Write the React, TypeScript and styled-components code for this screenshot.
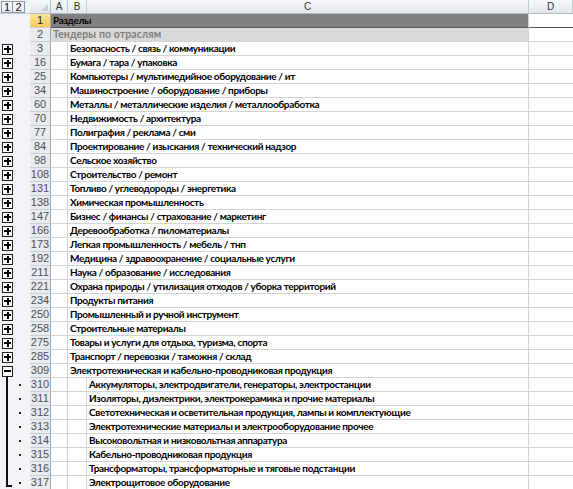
import React from "react";
import styled, { createGlobalStyle, css } from "styled-components";

const Global = createGlobalStyle`
  html, body { margin: 0; padding: 0; background: #ffffff; overflow: hidden; }
  body { font-family: Lato, "Liberation Sans", sans-serif; }
`;

const ROW_H = 14;
const COLS = "30px 21px 17px 19px 442px 1fr";

const Sheet = styled.div`
  width: 573px;
  height: 489px;
  overflow: hidden;
  display: flex;
  flex-direction: column;
`;

const Line = styled.div`
  display: grid;
  grid-template-columns: ${COLS};
  height: ${ROW_H}px;
  flex: 0 0 ${ROW_H}px;
`;

const Levels = styled.div`
  display: flex;
  padding: 1px 0 0 1px;
  background: #f1f3f6;
  border-bottom: 1px solid #c5cbd3;
  box-sizing: border-box;
`;

const LevelBtn = styled.div`
  width: 12px;
  height: 12px;
  box-sizing: border-box;
  border: 1px solid #8d96a3;
  background: linear-gradient(#fbfbfc, #e6e9ee);
  font: 11px "Liberation Sans", sans-serif;
  line-height: 10px;
  text-align: center;
  color: #111;
  & + & { border-left: none; }
`;

const Corner = styled.div`
  background: linear-gradient(#f6f7f9, #e3e7ec);
  border-right: 1px solid #b3bac4;
  border-bottom: 1px solid #b3bac4;
  box-sizing: border-box;
  position: relative;
  &::after {
    content: "";
    position: absolute;
    right: 2px;
    bottom: 2px;
    border-left: 7px solid transparent;
    border-bottom: 7px solid #c9ced6;
  }
`;

const ColHead = styled.div`
  background: linear-gradient(#f6f7f9, #e3e7ec);
  border-right: 1px solid #c3c9d2;
  border-bottom: 1px solid #b3bac4;
  box-sizing: border-box;
  font: 10px "Liberation Sans", sans-serif;
  color: #333;
  text-align: center;
  line-height: 13px;
`;

type Bracket = "start" | "mid" | "end";

const Outline = styled.div<{ $bracket?: Bracket }>`
  position: relative;
  background: #f1f3f6;
  display: flex;
  align-items: center;
  ${(p) =>
    p.$bracket &&
    css`
      &::before {
        content: "";
        position: absolute;
        left: 6px;
        top: ${p.$bracket === "start" ? "12px" : "0"};
        width: 2px;
        bottom: ${p.$bracket === "end" ? "3px" : "0"};
        background: #111;
      }
    `}
  ${(p) =>
    p.$bracket === "end" &&
    css`
      &::after {
        content: "";
        position: absolute;
        left: 6px;
        bottom: 3px;
        width: 6px;
        height: 2px;
        background: #111;
      }
    `}
`;

const ToggleBox = styled.div`
  position: relative;
  margin-left: 2px;
  width: 11px;
  height: 11px;
  box-sizing: border-box;
  border: 1px solid #222;
  background: #ffffff;
  &::before {
    content: "";
    position: absolute;
    left: 1px;
    right: 1px;
    top: 3.5px;
    height: 2px;
    background: #000;
  }
`;

const PlusBox = styled(ToggleBox)`
  &::after {
    content: "";
    position: absolute;
    top: 1px;
    bottom: 1px;
    left: 3.5px;
    width: 2px;
    background: #000;
  }
`;

const Dot = styled.span`
  margin-left: 19px;
  width: 2px;
  height: 2px;
  background: #222;
`;

const RowHead = styled.div<{ $active?: boolean }>`
  background: ${(p) =>
    p.$active ? "linear-gradient(#fbe49c, #f3c95c)" : "#e9ebee"};
  border-right: 1px solid #9ea6b0;
  border-bottom: 1px solid #c9ced6;
  box-sizing: border-box;
  font: 11px "Liberation Sans", sans-serif;
  color: ${(p) => (p.$active ? "#222" : "#4a4f57")};
  text-align: center;
  line-height: 13px;
`;

type Tone = "title" | "sub" | "plain";

const Cell = styled.div<{ $tone: Tone; $span?: number }>`
  grid-column: span ${(p) => p.$span ?? 1};
  box-sizing: border-box;
  border-bottom: 1px solid
    ${(p) => (p.$tone === "title" ? "#555" : "#d4d4d4")};
  border-right: 1px solid #d4d4d4;
  background: ${(p) =>
    p.$tone === "title" ? "#808080" : p.$tone === "sub" ? "#d9d9d9" : "#fff"};
  font-family: Lato, "Liberation Sans", sans-serif;
  font-weight: 700;
  font-size: ${(p) => (p.$tone === "sub" ? "10.5px" : "10px")};
  letter-spacing: ${(p) => (p.$tone === "sub" ? "0.1px" : "-0.35px")};
  line-height: 13px;
  color: ${(p) =>
    p.$tone === "title" ? "#000" : p.$tone === "sub" ? "#7f7f7f" : "#000"};
  white-space: nowrap;
  overflow: hidden;
  padding-left: 2px;
`;

const Blank = styled.div<{ $title?: boolean }>`
  box-sizing: border-box;
  border-bottom: 1px solid ${(p) => (p.$title ? "#555" : "#d4d4d4")};
  background: #fff;
`;

type Row = {
  n: number;
  text: string;
  level: 1 | 2;
  toggle?: "plus" | "minus";
};

const sections: [number, string][] = [
  [3, "Безопасность / связь / коммуникации"],
  [16, "Бумага / тара / упаковка"],
  [25, "Компьютеры / мультимедийное оборудование / ит"],
  [34, "Машиностроение / оборудование / приборы"],
  [60, "Металлы / металлические изделия / металлообработка"],
  [70, "Недвижимость / архитектура"],
  [77, "Полиграфия / реклама / сми"],
  [84, "Проектирование / изыскания / технический надзор"],
  [98, "Сельское хозяйство"],
  [108, "Строительство / ремонт"],
  [131, "Топливо / углеводороды / энергетика"],
  [138, "Химическая промышленность"],
  [147, "Бизнес / финансы / страхование / маркетинг"],
  [166, "Деревообработка / пиломатериалы"],
  [173, "Легкая промышленность / мебель / тнп"],
  [192, "Медицина / здравоохранение / социальные услуги"],
  [211, "Наука / образование / исследования"],
  [221, "Охрана природы / утилизация отходов / уборка территорий"],
  [234, "Продукты питания"],
  [250, "Промышленный и ручной инструмент"],
  [258, "Строительные материалы"],
  [275, "Товары и услуги для отдыха, туризма, спорта"],
  [285, "Транспорт / перевозки / таможня / склад"],
];

const children: [number, string][] = [
  [310, "Аккумуляторы, электродвигатели, генераторы, электростанции"],
  [311, "Изоляторы, диэлектрики, электрокерамика и прочие материалы"],
  [312, "Светотехническая и осветительная продукция, лампы и комплектующие"],
  [313, "Электротехнические материалы и электрооборудование прочее"],
  [314, "Высоковольтная и низковольтная аппаратура"],
  [315, "Кабельно-проводниковая продукция"],
  [316, "Трансформаторы, трансформаторные и тяговые подстанции"],
  [317, "Электрощитовое оборудование"],
];

const rows: Row[] = [
  ...sections.map(([n, text]) => ({ n, text, level: 1 as const, toggle: "plus" as const })),
  { n: 309, text: "Электротехническая и кабельно-проводниковая продукция", level: 1, toggle: "minus" },
  ...children.map(([n, text]) => ({ n, text, level: 2 as const })),
];

export default function App() {
  const lastChild = children[children.length - 1][0];
  const bracketFor = (r: Row): Bracket | undefined =>
    r.toggle === "minus"
      ? "start"
      : r.level === 2
      ? r.n === lastChild
        ? "end"
        : "mid"
      : undefined;
  return (
    <>
      <Global />
      <Sheet>
        <Line>
          <Levels>
            <LevelBtn>1</LevelBtn>
            <LevelBtn>2</LevelBtn>
          </Levels>
          <Corner />
          <ColHead>A</ColHead>
          <ColHead>B</ColHead>
          <ColHead>C</ColHead>
          <ColHead>D</ColHead>
        </Line>

        <Line>
          <Outline />
          <RowHead $active>1</RowHead>
          <Cell $tone="title" $span={3}>
            Разделы
          </Cell>
          <Blank $title />
        </Line>
        <Line>
          <Outline />
          <RowHead>2</RowHead>
          <Cell $tone="sub" $span={3}>
            Тендеры по отраслям
          </Cell>
          <Blank />
        </Line>

        {rows.map((r) => (
          <Line key={r.n}>
            <Outline $bracket={bracketFor(r)}>
              {r.toggle === "plus" && <PlusBox />}
              {r.toggle === "minus" && <ToggleBox />}
              {r.level === 2 && <Dot />}
            </Outline>
            <RowHead>{r.n}</RowHead>
            <Cell $tone="plain" />
            {r.level === 1 ? (
              <Cell $tone="plain" $span={2}>
                {r.text}
              </Cell>
            ) : (
              <>
                <Cell $tone="plain" />
                <Cell $tone="plain">{r.text}</Cell>
              </>
            )}
            <Blank />
          </Line>
        ))}
      </Sheet>
    </>
  );
}
